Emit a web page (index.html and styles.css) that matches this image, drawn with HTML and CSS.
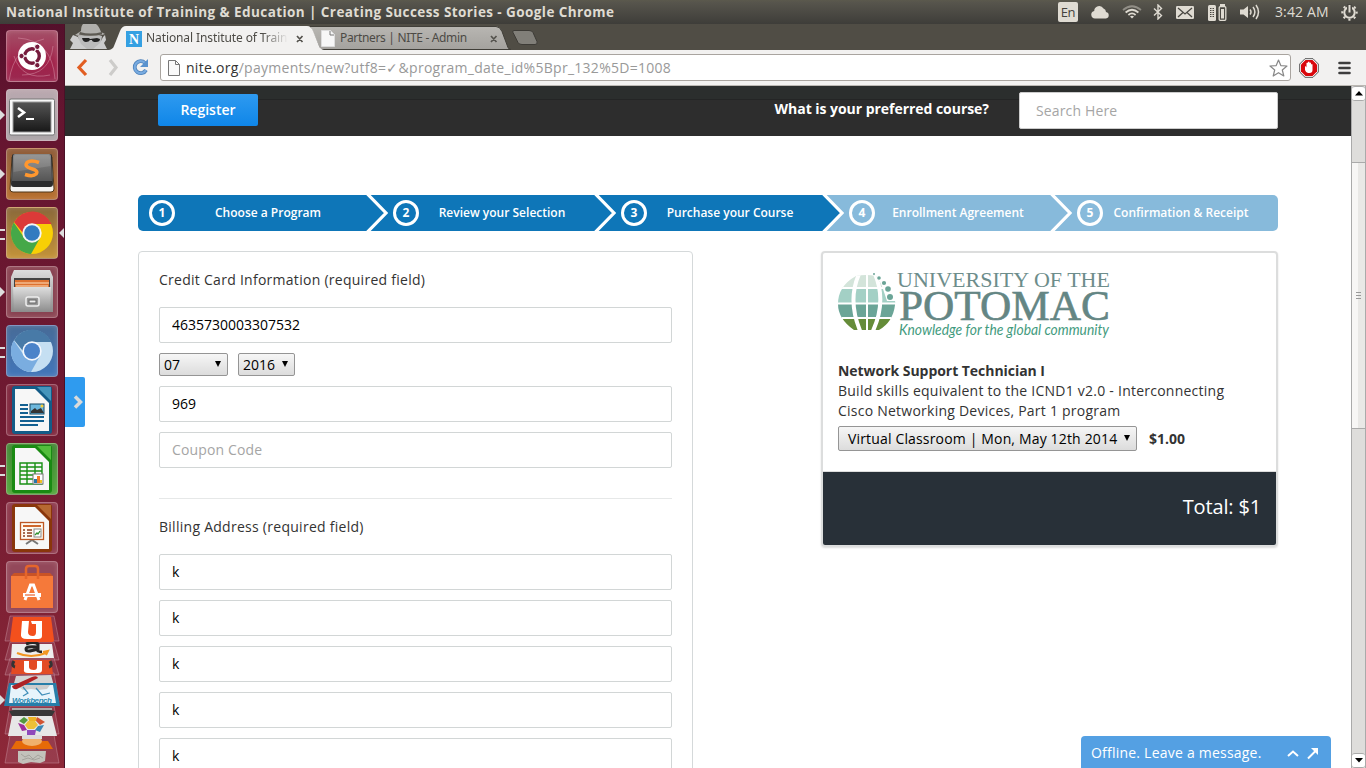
FILE: index.html
```html
<!DOCTYPE html>
<html lang="en">
<head>
<meta charset="utf-8">
<title>National Institute of Training &amp; Education | Creating Success Stories</title>
<link rel="stylesheet" href="styles.css">
</head>
<body>
<div class="desktop">
  <header class="menubar">
    <span class="window-title">National Institute of Training &amp; Education | Creating Success Stories - Google Chrome</span>
    <div class="indicators">
      <span class="lang">En</span>
      <svg class="ind-cloud" width="18" height="14" viewBox="0 0 18 14"><path d="M4 13.500a3.800 3.800 0 0 1-.8-7.500A5 5 0 0 1 12.500 3.500a4 4 0 0 1 2.500 3.500 3.300 3.300 0 0 1 0 6.500z"/></svg>
      <svg class="ind-wifi" width="20" height="14" viewBox="0 0 20 14"><g fill="none" stroke="#dfdbd2" stroke-width="1.700"><path d="M1 5Q10-2.500 19 5" opacity=".45"/><path d="M3.600 7.500Q10 2 16.400 7.500"/><path d="M6.400 10Q10 6.700 13.600 10"/></g><path d="M8 11.500Q10 10 12 11.500L10 13.600z"/></svg>
      <svg class="ind-bt" width="10" height="16" viewBox="0 0 10 16"><path d="M1 4.500l7.500 7L5 15V1l3.500 3.500-7.500 7" fill="none" stroke="#dfdbd2" stroke-width="1.400"/></svg>
      <svg class="ind-mail" width="18" height="13" viewBox="0 0 18 13"><rect width="18" height="13" rx="1.200"/><path d="M2 2l7 6 7-6M2 11l5-4.500M16 11l-5-4.500" fill="none" stroke="#4a4842" stroke-width="1.300"/></svg>
      <svg class="ind-bat" width="19" height="17" viewBox="0 0 19 17"><rect y="1" width="8" height="16" rx="1.500"/><path d="M2 4.500h4M2 6.500h4M2 8.500h4M2 10.500h4M2 12.500h4" stroke="#4a4842" stroke-dasharray="1 .5"/><rect x="12" width="5" height="3"/><rect x="11.200" y="2.700" width="6.600" height="13.600" rx="1" fill="#4a4842" stroke="#dfdbd2" stroke-width="1.300"/><rect x="13" y="5" width="3" height="9.500"/></svg>
      <svg class="ind-vol" width="20" height="16" viewBox="0 0 20 16"><path d="M0 5.500h3.500L8 2v12l-4.500-3.500H0z"/><g fill="none" stroke="#dfdbd2" stroke-width="1.500"><path d="M10 5.500q2 2.500 0 5M13 3q3.800 5 0 10M16 1q5 7 0 14"/></g></svg>
      <span class="clock">3:42 AM</span>
      <svg class="ind-gear" width="17" height="17" viewBox="0 0 17 17"><circle cx="8.500" cy="8.500" r="7.200" fill="none" stroke="#dfdbd2" stroke-width="2" stroke-dasharray="2.200 3.455" stroke-dashoffset="1.100"/><circle cx="8.500" cy="8.500" r="5.200" fill="none" stroke="#dfdbd2" stroke-width="2"/><path d="M8.500 0v8" stroke="#4a4842" stroke-width="5"/><path d="M8.500 1v7.500" stroke="#dfdbd2" stroke-width="2"/></svg>
    </div>
  </header>

  <div class="workspace">
    <aside class="launcher">
      <div class="tile t-dash"><svg viewBox="0 0 52 52"><g fill="none" stroke="#d896a9" stroke-width="1" opacity=".5"><path d="M3 51Q8 16 38 9M49 49Q46 10 12 8M8 26Q16 51 44 45M16 45Q44 45 47 16"/></g><circle cx="26" cy="26" r="14" fill="#fff"/><circle cx="26" cy="26" r="7.300" fill="none" stroke="#761b3d" stroke-width="3.400"/><g stroke="#fff" stroke-width="1.300"><path d="M26 26H14M26 26l6-11M26 26l6 11"/></g><g fill="#761b3d" stroke="#fff"><circle cx="15.500" cy="26" r="2.700"/><circle cx="31.300" cy="16.800" r="2.700"/><circle cx="31.300" cy="35.200" r="2.700"/></g></svg></div>
      <div class="tile t-term running"><svg viewBox="0 0 52 52"><defs><linearGradient id="term" x2="0" y2="1"><stop stop-color="#555"/><stop offset="1" stop-color="#181818"/></linearGradient></defs><rect x="3.500" y="10" width="45" height="36" rx="1.500" fill="#f8f8f8" stroke="#777"/><rect x="7" y="13" width="38" height="30" fill="url(#term)" stroke="#999"/><path d="M12 19l6 4.500-6 4.500" fill="none" stroke="#fff" stroke-width="2.600"/><path d="M20 30h8" stroke="#fff" stroke-width="2"/></svg></div>
      <div class="tile t-sublime running"><svg viewBox="0 0 52 52"><defs><linearGradient id="key" x2="0" y2="1"><stop stop-color="#8a8a8a"/><stop offset="1" stop-color="#555"/></linearGradient></defs><path d="M6 9h40l2 32q0 3-3 3H7q-3 0-3-3z" fill="#f6f4f1" stroke="#503719"/><path d="M8 6h36q2 0 2 2l1 28q0 3-3 3H8q-3 0-3-3L6 8q0-2 2-2z" fill="#2c2c2c"/><path d="M9 6h34q2 0 2 2l1 25H6L7 8q0-2 2-2z" fill="url(#key)"/><path d="M8 9q0-2 2-2h32q2 0 2 2l.5 9L7.500 24z" fill="#fff" opacity=".12"/><path d="M33 14.500q-8-3-12 0-3 4 4 6 8 2 5 5.500-3 3-11 .5" fill="none" stroke="#ff972e" stroke-width="3.500"/></svg></div>
      <div class="tile t-chrome running multi active"><svg viewBox="0 0 52 52"><circle cx="26" cy="26" r="21" fill="#f8cf05"/><path d="M8 15A21 21 0 0 1 45.500 17H26q-7 1-9 9z" fill="#dc3a38"/><path d="M7.800 15.500A21 21 0 0 0 25 47l9-16q-7 7-15 1z" fill="#45a848"/><circle cx="26" cy="26" r="9.700" fill="#f5f5f5"/><circle cx="26" cy="26" r="7.800" fill="#327bc0"/></svg></div>
      <div class="tile t-files running"><svg viewBox="0 0 52 52"><defs><linearGradient id="file" x2="0" y2="1"><stop stop-color="#dedede"/><stop offset="1" stop-color="#8c8c8c"/></linearGradient></defs><path d="M8 4h36l3 7v35H5V11z" fill="url(#file)"/><path d="M8 12h36v10H8z" fill="#444"/><path d="M9 14h34v8H9z" fill="#dd7130"/><path d="M9 17h34M10 20h32" stroke="#ffe1be"/><path d="M7 21h38l-1 25H8z" fill="url(#file)"/><rect x="20" y="31" width="13" height="9" rx="2" fill="#999" stroke="#eee" stroke-width="1.500"/><rect x="23" y="34" width="7" height="3" fill="#eee" stroke="#666"/></svg></div>
      <div class="tile t-chromium running multi"><svg viewBox="0 0 52 52"><circle cx="26" cy="26" r="21" fill="#c5dff2"/><path d="M8 15A21 21 0 0 1 45.500 17H26q-7 1-9 9z" fill="#487aa7"/><path d="M7.800 15.500A21 21 0 0 0 25 47l9-16q-7 7-15 1z" fill="#7aade0"/><circle cx="26" cy="26" r="9.700" fill="#f5f8fd"/><circle cx="26" cy="26" r="8" fill="#4b83c9"/></svg></div>
      <div class="tile t-doc"><svg viewBox="0 0 52 52"><rect x="6" y="2" width="40" height="48" rx="3" fill="#135b87"/><path d="M9 5h20l14 14v28H9z" fill="#f7f7f7"/><path d="M31 3h14v14z" fill="#4695bb"/><g stroke="#136091" stroke-width="2"><path d="M14 21h8M14 25h8M14 29h8M14 33h24M14 37h24M14 41h18"/></g><rect x="24" y="20" width="14" height="10" fill="#6eb8dd" stroke="#174865"/><path d="M25 29v-2l4-3 2 2 4-2 3 5z" fill="#333"/><circle cx="36" cy="22" r="1.500" fill="#f9ce37"/></svg></div>
      <div class="tile t-calc running multi"><svg viewBox="0 0 52 52"><rect x="6" y="2" width="40" height="48" rx="3" fill="#1a8a13"/><path d="M9 5h20l14 14v28H9z" fill="#f7f7f7"/><path d="M31 3h14v14z" fill="#53bd3c"/><path d="M14 20h22v21H14zM14 24h22M14 28h22M14 32h22M14 36h22M21 20v21M29 20v21" fill="none" stroke="#189015" stroke-width="1.400"/><rect x="27" y="31" width="10" height="10" fill="#fff" stroke="#777"/><path d="M28 40v-4h3v4z" fill="#2875a9"/><path d="M31 40v-7h3v7z" fill="#f27924"/><path d="M34 40v-3h2v3z" fill="#f0c322"/></svg></div>
      <div class="tile t-impress"><svg viewBox="0 0 52 52"><rect x="6" y="2" width="40" height="48" rx="3" fill="#89360b"/><path d="M9 5h20l14 14v28H9z" fill="#f7f7f7"/><path d="M31 3h14v14z" fill="#b66832"/><path d="M20 42l6-4 6 4" fill="none" stroke="#777" stroke-width="2"/><rect x="14.500" y="20.500" width="23" height="17" fill="#fff9f0" stroke="#bc5724" stroke-width="1.300"/><path d="M17 24h18" stroke="#cf672d" stroke-width="2"/><path d="M17 28h2M17 31h2M17 34h2M21 28h5M21 31h5M21 34h5" stroke="#8b3d1c" stroke-width="1.500"/><rect x="28" y="27" width="7" height="8" fill="#fff" stroke="#888"/><path d="M29 33l2-2 1 1 2-3" fill="none" stroke="#30902e" stroke-width="1.300"/></svg></div>
      <div class="tile t-software"><svg viewBox="0 0 52 52"><path d="M5 15h42v32H5z" fill="#f5793a"/><path d="M5 15l3-3h36l3 3z" fill="#c95325"/><path d="M20 18V8q0-3 3-3h6q3 0 3 3v10" fill="none" stroke="#e5652b" stroke-width="2.500"/><path d="M19 39l5.500-15h3L33 39" fill="none" stroke="#fff" stroke-width="3"/><path d="M17 34h18" stroke="#fff" stroke-width="4"/><path d="M19 34h10" stroke="#e76430" stroke-width="1.200"/></svg></div>
      <svg class="folded" width="65" height="153" viewBox="0 0 65 153">
        <g fill="#bd8294" fill-opacity=".22" stroke="#cb97a4" stroke-opacity=".45"><path d="M10 1h44l5 25H5zM10 27h44l5 18H5zM10 43h44l5 17H5zM10 58h44l5 29H5zM10 91h44l5 28H5zM10 120h44l5 28H5z"/></g>
        <path d="M12 29h40l2 14H11z" fill="#eee"/><path d="M26 29q8-3 12 0v7q2 1 4 1M37 32q-11-1-11 2 0 4 11 0" fill="none" stroke="#252525" stroke-width="3"/><path d="M17 38q14 6 29 0M43 37l5-1-2 4" fill="none" stroke="#f29621" stroke-width="2"/>
        <path d="M13 2h38l3 23q0 2-2 2H12q-2 0-2-2z" fill="#f3501d"/><path d="M22 6h7l-1 11q0 4 5 4 3 0 3-4V9h-4l-1-3h11v15q0 3-4 3H27q-7 0-6-5z" fill="#fff"/>
        <path d="M13 45h38l2 14H11z" fill="#e34b24"/><path d="M24 46h5v6q0 3 5 3 3 0 3-3v-6h5v9q0 3-4 3H28q-5 0-4-4z" fill="#fff"/>
        <path d="M14 46q-3 5 1 6M50 46q3 5-1 6" fill="none" stroke="#333" stroke-width="3"/>
        <path d="M16 61l35-1 3 11-7 7-34-6z" fill="#d4d4d4"/>
        <path d="M9 68h47l4 23H4z" fill="#277ea9"/><path d="M11 70h42l3 18H9z" fill="#e7f4fb"/><path d="M16 70h34l-3 4-9 1-7-1-8 1z" fill="#ccc"/><path d="M23 72l5 6-5 3M36 73l6 7 8-2" fill="none" stroke="#3f8eb9" stroke-width="1.200"/><path d="M12 71l20-9q5-2 6 1L17 74q-4 1-5-3z" fill="#ae2226"/><text x="12" y="88" textLength="40" class="workbench">Workbench</text>
        <path d="M9 96q23-6 46 0l-3 5H12z" fill="#373737"/><path d="M12 94h40" stroke="#aaa" stroke-width="2"/><path d="M12 101h40l5 20H8z" fill="#e7e7e7"/><g><path d="M19 106l5-4 4 3-4 4z" fill="#53993d"/><path d="M28 102h8l2 4h-9z" fill="#edb326"/><path d="M37 102l8 5-5 3-4-4z" fill="#d35432"/><path d="M18 108l6 2 3 5-5 1z" fill="#9e2d9a"/><path d="M38 111l6-1-4 7-5-2z" fill="#3986b5"/><path d="M27 115h9l-1 5h-8z" fill="#8e4abb"/><path d="M28 106h7l3 4-4 4h-6l-3-4z" fill="#edc037"/></g>
        <path d="M16 126h32l5 8H11z" fill="#e66a08"/><ellipse cx="32" cy="126" rx="10" ry="5" fill="#f0b16c"/><path d="M22 122h20" stroke="#ddd" stroke-width="4"/><path d="M18 136h28l-1 10-5 2-9-1-8 2-5-2z" fill="#c3c2bb"/><path d="M21 139l4 3 4-2 4 4 5-4 5 3M22 145l6-2 6 2 6-2" stroke="#a5a39c" fill="none"/>
        <path d="M0 80l5 5-5 5z" fill="#ddd"/>
      </svg>
    </aside>

    <main class="browser">
      <div class="tabstrip">
        <svg width="475" height="26" viewBox="0 0 475 26">
          <defs><linearGradient id="tabgray" x2="0" y2="1"><stop stop-color="#b8b6b2"/><stop offset="1" stop-color="#a4a29e"/></linearGradient></defs>
          <path d="M245 2.500H431q4 0 6 5l6 16q1 2 3 2H255z" fill="url(#tabgray)" stroke="#403e38"/>
          <path d="M449 6.500h15q3 0 4 2l4 9q1 3-2 3h-13q-3 0-4-2l-5-10q-1-2 1-2z" fill="#817f79" stroke="#3d3b36"/>
          <path d="M44 26q4-1 5-4l6-15q2-5 6-5H242q4 0 6 5l6 15q1 3 5 4z" fill="#f2f1f0"/>
          <path d="M16 7q0-5 2-7h13q3 2 5 8l4 2-6 2-16 1-8-2z" fill="#b0afac"/><path d="M15 8q10 3 22 0v2.500q-12 2.500-23 0z" fill="#5d5a53"/><path d="M13 12h24l-2 13H15z" fill="#bbb"/><path d="M17 14h7l1 1 7-1 3 1q0 3-4 3t-4-2h-2q-1 2-4 2t-4-4z" fill="#222"/><path d="M8 11l5 2 3 7 6 5H5l3-6-3-3zM38 13l2-2 1 5-2 3 3 6H28l7-6z" fill="#ccc"/>
          <rect x="61" y="7" width="16" height="16" fill="#35a0e2"/><text x="69" y="20" text-anchor="middle" class="favicon">N</text>
          <path d="M232 12l5.500 6M237.500 12l-5.500 6M426 12l5.500 6M431.500 12l-5.500 6" stroke="#55534e" stroke-width="1.700"/>
          <path d="M256.500 6.500h9l4 4v12h-13z" fill="#f7f7f7" stroke="#ddd"/><path d="M265 7v4h4" fill="none" stroke="#777"/>
        </svg>
        <span class="tab-label first">National Institute of Train</span>
        <span class="tab-label second">Partners | NITE - Admin</span>
      </div>

      <div class="toolbar">
        <svg width="88" height="24" viewBox="0 0 88 24">
          <path d="M21 4l-7 7.500 7 7.500" fill="none" stroke="#e25e22" stroke-width="3.200"/><path d="M45 4l6 7.500-6 7.500" fill="none" stroke="#cdccca" stroke-width="3.200"/><path d="M80 7a6 6 0 1 0 1 7" fill="none" stroke="#4f83bb" stroke-width="3.800"/><path d="M80 7a6 6 0 1 0 1 7" fill="none" stroke="#78abe0" stroke-width="2.200"/><path d="M83 3v8h-8z" fill="#5992ce"/>
        </svg>
        <div class="address">
          <svg width="12" height="16" viewBox="0 0 12 16"><path d="M.5.500h7l4 4v11H.5z" fill="#f9f9f9" stroke="#777"/><path d="M7.500.500v4h4" fill="none" stroke="#777"/></svg>
          <span class="url"><b>nite.org</b>/payments/new?utf8=✓&amp;program_date_id%5Bpr_132%5D=1008</span>
          <svg class="star" width="19" height="18" viewBox="0 0 19 18"><path d="M9.500 1l2.300 5.600 6.200.4-4.700 4 1.500 6-5.300-3.300L4.200 17l1.500-6L1 7l6.200-.4z" fill="#fff" stroke="#888" stroke-linejoin="round" stroke-width="1.200"/></svg>
        </div>
        <svg class="adblock" width="20" height="20" viewBox="0 0 20 20"><path d="M6 .7h8L19.300 6v8L14 19.300H6L.7 14V6z" fill="#fff" stroke="#555"/><path d="M6.500 2h7L18 6.500v7L13.500 18h-7L2 13.500v-7z" fill="#d9080d"/><path d="M6 8.500q1-1 1.500 1V5q1-1 1.500 0V4q1-1 1.500 0v1q1-1 1.500 0v1.500q1-1 1.500 0V12q0 3-3 3H9q-2 0-3-3z" fill="#fff"/></svg>
        <svg class="menu" width="13" height="14" viewBox="0 0 13 14"><path d="M1.500 2h10M1.500 7h10M1.500 12h10" stroke="#3d3d3d" stroke-width="2.600" stroke-linecap="round"/></svg>
      </div>

      <div class="viewport">
        <div class="page">
          <div class="site-header">
            <button class="register">Register</button>
            <label class="question">What is your preferred course?</label>
            <input class="search" placeholder="Search Here">
          </div>

          <div class="steps">
            <div class="step"><span class="num">1</span><span class="step-name">Choose a Program</span></div>
            <div class="step"><svg class="chevron" width="24" height="36" viewBox="0 0 24 36"><path d="M1-1.500L20 18 1 37.500" fill="none" stroke="#fff" stroke-width="3.200"/></svg><span class="num">2</span><span class="step-name">Review your Selection</span></div>
            <div class="step"><svg class="chevron" width="24" height="36" viewBox="0 0 24 36"><path d="M1-1.500L20 18 1 37.500" fill="none" stroke="#fff" stroke-width="3.200"/></svg><span class="num">3</span><span class="step-name">Purchase your Course</span></div>
            <div class="step pending"><svg class="chevron" width="24" height="36" viewBox="0 0 24 36"><path d="M-4-1.500h5L20 18 1 37.500h-5" fill="#0e76b8" stroke="#fff" stroke-width="3.200"/></svg><span class="num">4</span><span class="step-name">Enrollment Agreement</span></div>
            <div class="step pending last"><svg class="chevron" width="24" height="36" viewBox="0 0 24 36"><path d="M1-1.500L20 18 1 37.500" fill="none" stroke="#fff" stroke-width="3.200"/></svg><span class="num">5</span><span class="step-name">Confirmation &amp; Receipt</span></div>
          </div>

          <div class="columns">
            <form class="payment">
              <h2>Credit Card Information (required field)</h2>
              <input class="field" value="4635730003307532">
              <div class="expiry"><div class="select month"><span>07</span><i></i></div><div class="select year"><span>2016</span><i></i></div></div>
              <input class="field" value="969">
              <input class="field" placeholder="Coupon Code">
              <hr>
              <h2>Billing Address (required field)</h2>
              <input class="field" value="k">
              <input class="field" value="k">
              <input class="field" value="k">
              <input class="field" value="k">
              <input class="field" value="k">
            </form>

            <section class="summary">
              <div class="summary-body">
                <svg class="logo" width="276" height="84" viewBox="0 -10 276 84">
                  <defs><clipPath id="globe"><path d="M18 5q10-2 20 0 6 12 15 12 5 8 4 17-2 17-16 25H16Q0 48 0 33 0 15 18 5z"/></clipPath></defs>
                  <g clip-path="url(#globe)"><path d="M0 0h58v17H0z" fill="#d3e4da"/><path d="M0 18h58v14H0z" fill="#a3d0c5"/><path d="M0 33h58v14H0z" fill="#6ba597"/><path d="M0 48h58v14H0z" fill="#658c39"/><g fill="none" stroke="#fff" stroke-width="2"><path d="M0 17h60M0 32.500h60M0 47h60M29 0v62"/><path d="M21 3Q9 30 23 62M37 3q12 28-3 59" stroke-width="4"/></g></g>
                  <path d="M39 2l18 0v28H49l-4-12z" fill="#fff"/><g fill="#6ba597"><circle cx="36" cy="3" r="1"/><circle cx="41" cy="7" r="1.800"/><circle cx="46" cy="12" r="2.100"/><circle cx="50" cy="18" r="2.800"/><circle cx="52" cy="26" r="3"/></g>
                  <text class="logo-small" x="59" y="15.500" textLength="213" lengthAdjust="spacingAndGlyphs">UNIVERSITY OF THE</text>
                  <text class="logo-large" x="61" y="49" textLength="211" lengthAdjust="spacingAndGlyphs">POTOMAC</text>
                  <text class="logo-tag" x="61" y="63.500" textLength="210" lengthAdjust="spacingAndGlyphs">Knowledge for the global community</text>
                </svg>
                <h3>Network Support Technician I</h3>
                <p>Build skills equivalent to the ICND1 v2.0 - Interconnecting<br>Cisco Networking Devices, Part 1 program</p>
                <div class="session"><div class="select course"><span>Virtual Classroom | Mon, May 12th 2014</span><i></i></div><strong>$1.00</strong></div>
              </div>
              <div class="total">Total: $1</div>
            </section>
          </div>

          <div class="side-tab"><svg width="11" height="14" viewBox="0 0 11 14"><path d="M2 1.500L7.500 7 2 12.500" fill="none" stroke="#d9dadb" stroke-width="3.500"/></svg></div>
          <div class="chat"><span>Offline. Leave a message.</span><svg width="32" height="14" viewBox="0 0 32 14"><path d="M1 10l5-4.500L11 10" fill="none" stroke="#fff" stroke-width="2"/><path d="M21 12.500l9-9" stroke="#fff" stroke-width="2"/><path d="M24 2h7v7z" fill="#fff"/></svg></div>
        </div>
        <div class="scrollbar">
          <div class="sb-button"><svg width="8" height="5" viewBox="0 0 8 5"><path d="M4 0l4 4.500H0z"/></svg></div>
          <div class="sb-track upper"></div>
          <div class="sb-thumb"><i></i><i></i><i></i></div>
          <div class="sb-track lower"></div>
          <div class="sb-button"><svg width="8" height="5" viewBox="0 0 8 5"><path d="M0 0h8L4 4.500z"/></svg></div>
        </div>
      </div>
    </main>
  </div>
</div>
</body>
</html>
```

FILE: styles.css
```css
* { box-sizing: border-box; }
body { margin: 0; width: 1366px; height: 768px; overflow: hidden; background: #fff; font: 14px/20px "Open Sans", "Noto Sans", sans-serif; color: #333; }
svg { display: block; flex: none; }
.desktop { width: 1366px; height: 768px; display: flex; flex-direction: column; }

/* Desktop panel */
.menubar { height: 24px; flex: none; display: flex; align-items: center; justify-content: space-between; padding: 0 8px 0 6px; background: linear-gradient(#5b594d 0, #56544c 3px, #3e3d39); color: #dfdbd2; white-space: nowrap; }
.window-title { font-size: 13.5px; font-weight: 700; letter-spacing: .42px; }
.indicators { display: flex; align-items: center; height: 24px; fill: #dfdbd2; }
.lang { width: 20px; height: 20px; border-radius: 2px; background: #dfdbd2; color: #44423c; font-size: 13px; text-align: center; letter-spacing: -.4px; }
.ind-cloud { margin-left: 13px; }
.ind-wifi { margin-left: 13px; }
.ind-bt { margin-left: 11px; }
.ind-mail { margin-left: 13px; }
.ind-bat { margin-left: 14px; }
.ind-vol { margin-left: 13px; }
.clock { width: 54px; margin-left: 15px; font-size: 14px; letter-spacing: .12px; }
.ind-gear { margin-left: 12px; }

.workspace { height: 744px; display: flex; }
.launcher { width: 65px; height: 744px; flex: none; display: flex; flex-direction: column; align-items: flex-start; gap: 7px; padding-top: 6px; overflow: hidden; background: linear-gradient(#54102b, #651530 12%, #701a31 55%, #8d2838); border-right: 1px solid #4a1127; }
.tile { position: relative; width: 52px; height: 52px; margin-left: 6px; flex: none; border-radius: 4px; border: 1px solid rgba(235,205,212,.38); background: #8a3045; box-shadow: inset 0 0 5px rgba(255,220,220,.2); }
.tile svg { width: 52px; height: 52px; margin: -1px; }
.t-dash { background: linear-gradient(#a45068, #a1224a 65%, #9a2850); }
.t-term { background: linear-gradient(#b9a8af, #aaa5a8); }
.t-sublime { background: linear-gradient(#8e5c39, #b7702f); }
.t-chrome { background: linear-gradient(#8a683a, #c39339); }
.t-files { background: #894352; }
.t-chromium { background: linear-gradient(#476b97, #4276b9); }
.t-doc { background: #7e263d; }
.t-calc { background: linear-gradient(#408734, #50a73a); }
.t-impress { background: #8c384b; }
.t-software { background: #93485a; }
.running::before { content: ""; position: absolute; left: -7px; top: 20px; border: 5px solid transparent; border-left-color: #ddd; border-right: 0; }
.running.multi::before { top: 21px; width: 5px; height: 7px; border: solid #ddd; border-width: 2px 0; }
.active::after { content: ""; position: absolute; right: -7px; top: 20px; border: 5px solid transparent; border-right-color: #ddd; border-left: 0; }
.folded { margin-top: -5px; }
.workbench { font: italic 700 8px "Liberation Sans", sans-serif; fill: #2c89b1; }

/* Browser frame */
.browser { width: 1301px; }
.tabstrip { position: relative; height: 26px; background: #504d45; }
.tab-label { position: absolute; top: 4px; font: 12px/20px "Noto Sans", "Open Sans", sans-serif; color: #4c4a45; white-space: nowrap; }
.first { left: 81px; width: 142px; overflow: hidden; letter-spacing: -.1px; -webkit-mask-image: linear-gradient(90deg, #000 82%, transparent); mask-image: linear-gradient(90deg, #000 82%, transparent); }
.second { left: 275px; letter-spacing: -.33px; }
.favicon { font: 700 14px "Liberation Serif", serif; fill: #fff; }
.toolbar { height: 36px; display: flex; align-items: center; background: #f2f1f0; border-bottom: 1px solid #bbb8b3; }
.address { width: 1131px; height: 27px; margin-left: 7px; border: 1px solid #a9a49f; border-radius: 3px; background: #fff; display: flex; align-items: center; padding: 0 2px 0 7px; }
.url { margin-left: 6px; font-size: 14px; color: #999; letter-spacing: .28px; }
.url b { font-weight: 400; color: #333; }
.star { margin-left: auto; }
.adblock { margin-left: 8px; }
.menu { margin-left: 19px; }

.viewport { display: flex; height: 682px; }
.page { position: relative; width: 1286px; height: 682px; overflow: hidden; background: #fff; }
.site-header { height: 50px; display: flex; align-items: flex-start; padding: 6px 73px 0 93px; background: linear-gradient(#2b2e2d 13px, #242525 13px, #242525 14px, #2d2d2d 14px); }
.register { width: 100px; height: 32px; margin-top: 2px; padding: 0; border: 0; border-radius: 2px; background: linear-gradient(#2e9af0, #0f86e8); color: #fff; font: 600 14px/32px "Open Sans", sans-serif; }
.question { margin-left: auto; margin-right: 30px; padding-top: 7px; font-weight: 700; letter-spacing: -.04px; color: #fff; }
.search { width: 259px; height: 37px; border: 1px solid #ccc; border-radius: 2px; padding: 0 16px; font: 14px "Open Sans", sans-serif; }
input::placeholder { color: #a5a5a5; opacity: 1; letter-spacing: .14px; }

.steps { display: flex; width: 1140px; height: 36px; margin: 59px 0 20px 73px; overflow: hidden; border-radius: 5px; }
.step { position: relative; width: 228px; display: flex; align-items: center; padding-left: 27px; background: #0e76b8; color: #fff; font-size: 12px; font-weight: 600; }
.step:first-child { padding-left: 11px; }
.pending { background: #87badb; }
.chevron { position: absolute; left: 0; top: 0; }
.num { width: 26px; height: 26px; flex: none; border: 3px solid #fff; border-radius: 50%; text-align: center; line-height: 19px; font-weight: 700; }
.step-name { width: 166px; text-align: center; white-space: nowrap; }
.step:first-child .step-name { width: 186px; }
.last .step-name { width: 156px; }

.columns { display: flex; align-items: flex-start; justify-content: space-between; width: 1140px; margin-left: 73px; }
.payment { width: 555px; height: 620px; padding: 18px 20px; border: 1px solid #d5d9da; border-radius: 4px; }
h2 { margin: 0 0 17px; font: 14px/20px "Open Sans", sans-serif; letter-spacing: .27px; }
.field { display: block; width: 513px; height: 36px; margin: 0 0 10px; padding: 0 12px 2px; border: 1px solid #d2d6d6; border-radius: 2px; background: #fff; color: #000; font: 14px "Open Sans", sans-serif; }
.expiry { display: flex; gap: 10px; margin-bottom: 10px; }
.select { height: 23px; display: flex; align-items: center; justify-content: space-between; padding: 0 5px 0 4px; border: 1px solid #959595; border-radius: 2px; background: linear-gradient(#f6f6f6, #dcdcdc); color: #000; white-space: nowrap; }
.select i { border: 3px solid transparent; border-top: 6px solid #000; border-bottom: 0; margin-top: -2px; }
.month { width: 69px; padding-right: 6px; }
.year { width: 57px; padding-right: 6px; }
hr { height: 1px; border: 0; margin: 30px 0 18px; background: #e6e8e8; }

.summary { width: 457px; height: 296px; border: 2px solid #dcdddd; border-radius: 4px; box-shadow: 0 1px 2px #ddd; overflow: hidden; display: flex; flex-direction: column; }
.summary-body { height: 219px; padding: 8px 15px 0; border-bottom: 1px solid #ddd; }
.logo-small { font: 21px "Liberation Serif", serif; fill: #6d8d8b; }
.logo-large { font: 43px "Liberation Serif", serif; fill: #648684; stroke: #648684; stroke-width: .6px; }
.logo-tag { font: italic 15px Lato, sans-serif; fill: #439b7e; }
h3 { margin: 16px 0 0; font: 700 14px/20px "Open Sans", sans-serif; letter-spacing: -.04px; }
.summary p { margin: 0 0 5px; white-space: nowrap; letter-spacing: .24px; }
.summary p::first-line { letter-spacing: .24px; }
.session { display: flex; align-items: center; gap: 12px; }
.course { width: 299px; height: 25px; padding: 0 6px 0 9px; letter-spacing: .16px; }
.total { flex: 1; padding: 20px 15px 0; background: #283038; color: #fff; font-size: 20px; letter-spacing: -.15px; line-height: 30px; text-align: right; }
.side-tab { position: absolute; left: 0; top: 291px; width: 20px; height: 50px; display: flex; align-items: center; padding-left: 8px; background: #2f9bef; border-radius: 0 2px 2px 0; }
.chat { position: absolute; left: 1016px; top: 650px; width: 250px; height: 32px; display: flex; align-items: center; justify-content: space-between; padding: 2px 12px 0 10px; border-radius: 4px 4px 0 0; background: #54a0e3; color: #fff; letter-spacing: .22px; }

.scrollbar { width: 15px; height: 682px; display: flex; flex-direction: column; border-left: 1px solid #aaa; border-right: 1px solid #aaa; background: #dedddb; }
.sb-button { height: 15px; display: flex; align-items: center; justify-content: center; border: 1px solid #aaa; border-width: 1px 0; border-radius: 3px; background: #fff; }
.upper { height: 61px; }
.sb-thumb { height: 267px; display: flex; flex-direction: column; align-items: center; justify-content: center; gap: 2px; border: 1px solid #aaa; border-width: 1px 0; background: linear-gradient(90deg, #f7f6f5 50%, #e9e8e6 50%); }
.sb-thumb i { width: 5px; height: 1px; background: #999; }
.lower { flex: 1; }
```
